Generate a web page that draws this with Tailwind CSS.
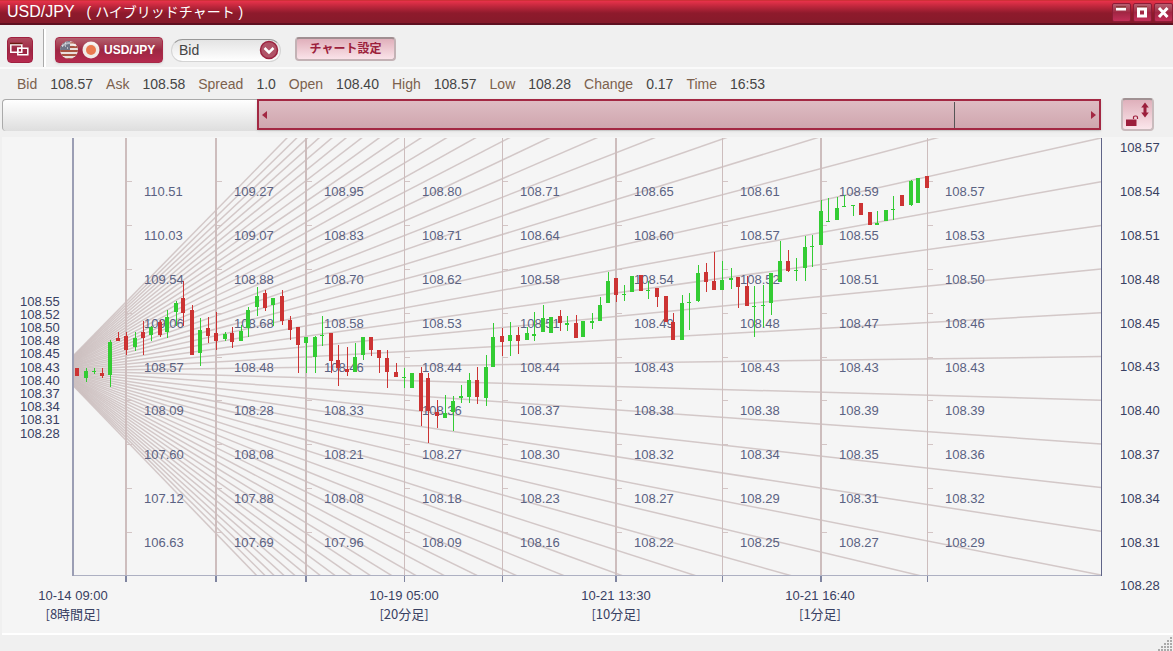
<!DOCTYPE html>
<html lang="ja">
<head>
<meta charset="utf-8">
<meta name="viewport" content="width=device-width, initial-scale=1">
<title>USD/JPY ( ハイブリッドチャート )</title>
<script src="https://cdn.jsdelivr.net/npm/@tailwindcss/browser@4"></script>
</head>
<body class="flex min-h-screen flex-col bg-[#f0f0f0] font-['Liberation_Sans','Noto_Sans_CJK_JP',sans-serif] text-[#444]">

<header class="flex h-[25px] items-center justify-between border-t border-b-2 border-t-[#cf3038] border-b-[#5e1020] bg-linear-to-b from-[#e8324a] via-[#8e1a2c] via-55% to-[#861a2a] pl-[7px] text-white">
  <h1 class="flex items-center whitespace-pre text-base leading-5">USD/JPY<span class="ml-3 text-sm leading-5">( ハイブリッドチャート )</span></h1>
  <div class="flex gap-[2px]">
    <button aria-label="最小化" class="h-[19px] w-[19px] rounded-xs border border-[#8d1c36] bg-linear-to-b from-[#b56070] via-[#a12643] to-[#c42f59]">
      <svg viewBox="0 0 16 17" class="h-[17px] w-4"><path d="M3 3.5h10v3H3z" fill="#fff"/><path d="M3 3h10" stroke="#6b1c10"/></svg>
    </button>
    <button aria-label="最大化" class="h-[19px] w-[19px] rounded-xs border border-[#8d1c36] bg-linear-to-b from-[#b56070] via-[#a12643] to-[#c42f59]">
      <svg viewBox="0 0 16 17" class="h-[17px] w-4"><path d="M3 3h10" stroke="#6b1c10"/><path d="M4.5 5h7v7h-7z" fill="none" stroke="#fff" stroke-width="3"/></svg>
    </button>
    <button aria-label="閉じる" class="h-[19px] w-[19px] rounded-xs border border-[#8d1c36] bg-linear-to-b from-[#b56070] via-[#a12643] to-[#c42f59]">
      <svg viewBox="0 0 16 17" class="h-[17px] w-4"><path d="M4 4l8.500 9M12.500 4L4 13" stroke="#fff" stroke-width="3"/></svg>
    </button>
  </div>
</header>

<div class="flex h-11 items-center border-b-2 border-[#fafafa] pt-2 pl-[7px]">
  <button aria-label="ウィンドウ連動" class="size-[26px] rounded border border-[#a02040] bg-linear-to-b from-[#b04a5e] via-[#9c2743] to-[#b82b50]">
    <svg viewBox="0 0 24 24" class="size-6" fill="none" stroke="#fff" stroke-width="1.500"><path d="M2.800 6.800h11v7.500h-11z"/><path d="M2 5.500h12.500" stroke="#6b1c10"/><path d="M9.800 10.300h10v6.500h-10z" fill="#9c2743"/><path d="M9.800 10.300h4v4h-4z"/></svg>
  </button>
  <div class="-mt-1 ml-[10px] h-[38px] w-[3px] border-l border-[#aaa] bg-white"></div>
  <button class="ml-[9px] flex h-[26px] w-[108px] items-center rounded-sm border border-[#a82a48] bg-linear-to-b from-[#b4606f] via-[#9c2743] to-[#b52a4e] pl-[3px] text-xs font-bold text-white shadow-sm">
    <svg viewBox="0 0 42 20" class="h-5 w-[42px] shrink-0">
      <defs><clipPath id="us"><circle cx="10" cy="10" r="9"/></clipPath></defs>
      <g clip-path="url(#us)"><path d="M0 0h20v20H0z" fill="#eadfdb"/><path d="M0 3h20M0 7h20M0 11h20M0 15h20M0 19h20" stroke="#a8523f" stroke-width="2"/><path d="M0 0h11v10H0z" fill="#6f7486"/><path d="M3 3h1M6 3h1M3 6h1M6 6h1M8 8h1" stroke="#fff"/></g>
      <circle cx="32" cy="10" r="8.500" fill="#f1ebe6"/><circle cx="32" cy="10" r="5" fill="#ea7a50"/>
      <path d="M3 6q7-6 14 0M25 6q7-6 14 0" fill="none" stroke="#fff" stroke-opacity=".5" stroke-width="2"/>
    </svg>
    <span class="ml-[3px]">USD/JPY</span>
  </button>
  <label class="relative ml-2 h-6 w-[110px]">
    <select aria-label="レート種別" class="h-[23px] w-full appearance-none rounded-full border border-[#d4d4d4] border-t-[#999] bg-linear-to-b from-[#e4e4e4] to-white pl-[7px] text-sm text-[#444]"><option>Bid</option><option>Ask</option></select>
    <svg viewBox="0 0 20 20" class="pointer-events-none absolute top-[2px] right-[2px] size-5"><circle cx="10" cy="10" r="8.500" fill="#b05468" stroke="#9c2440" stroke-width="1.500"/><path d="M5.500 8l4.500 4.500L14.500 8" fill="none" stroke="#fff" stroke-width="2.500"/></svg>
  </label>
  <button class="-mt-[2px] ml-[14px] h-6 w-[101px] rounded-sm border-2 border-[#c3b2b5] border-t-[#a08e91] bg-linear-to-b from-[#e0b0bb] to-[#fae3e9] text-xs font-bold text-[#9c1f3c]">チャート設定</button>
</div>

<dl class="flex h-[29px] items-center gap-[13px] pt-px pl-[17px] text-sm whitespace-nowrap [&_dt]:text-[#7c614d]">
  <dt>Bid</dt><dd>108.57</dd><dt>Ask</dt><dd>108.58</dd><dt>Spread</dt><dd>1.0</dd><dt>Open</dt><dd>108.40</dd>
  <dt>High</dt><dd>108.57</dd><dt>Low</dt><dd>108.28</dd><dt>Change</dt><dd>0.17</dd><dt>Time</dt><dd>16:53</dd>
</dl>

<div class="flex h-[39px] items-start pr-[19px] pl-[2px]">
  <div class="mt-px flex h-8 flex-1 rounded-l-sm border-t border-l border-[#aaa] bg-linear-to-b from-white to-[#dedede]">
    <div class="w-[23.1%]"></div>
    <div class="-mt-px flex h-[31px] flex-1 items-center justify-between border-2 border-[#a32843] bg-linear-to-b from-[#debcc3] to-[#cfa6ae] px-[3px] shadow">
      <svg viewBox="0 0 5 8" class="h-2 w-[5px]"><path d="M5 0v8L0 4z" fill="#a32843"/></svg>
      <div class="ml-[82.4%] h-[26px] w-px bg-[#555]"></div>
      <svg viewBox="0 0 5 8" class="ml-auto h-2 w-[5px]"><path d="M0 0v8l5-4z" fill="#a32843"/></svg>
    </div>
  </div>
  <button aria-label="縦軸ロック解除" class="ml-5 size-[33px] rounded-sm border-2 border-[#c9bbbd] border-t-[#a09193] bg-linear-to-b from-[#dfb0bb] to-[#fbe6eb]">
    <svg viewBox="0 0 29 29" class="size-[29px]"><path d="M3 19.500h10.500V26H3z" fill="#9c1f3c"/><path d="M10.500 19v-2q0-1 1.500-1h1q1.500 0 1.500 1.500V19" fill="none" stroke="#9c1f3c" stroke-width="1.200"/><path d="M22 2.500l3.800 5H23.500v5h2.300L22 17.500l-3.800-5h2.300v-5h-2.300z" fill="#9c1f3c"/></svg>
  </button>
</div>

<main class="ml-[2px] border-b-2 border-white bg-[#f5f5f5]">
  <svg id="chart" viewBox="2 137 1171 496" class="block h-auto w-full font-['Liberation_Sans','Noto_Sans_CJK_JP',sans-serif] text-[13px]" role="img" aria-label="USD/JPY ローソク足チャート"></svg>
</main>

<footer class="flex flex-1 items-end justify-end">
  <svg viewBox="0 0 15 15" class="size-[15px]"><path d="M12 2h2M9 5h2M12 5h2M6 8h2M9 8h2M12 8h2M3 11h2M6 11h2M9 11h2M12 11h2M0 14h2M3 14h2M6 14h2M9 14h2M12 14h2" stroke="#aaa" stroke-width="2"/></svg>
</footer>

<script>
const NS = 'http://www.w3.org/2000/svg';
const chart = document.getElementById('chart');
function add(tag, attrs, text) {
  const el = document.createElementNS(NS, tag);
  for (const k in attrs) el.setAttribute(k, attrs[k]);
  if (text) el.textContent = text;
  chart.appendChild(el);
}
const rect = (x, y, width, height, fill) => add('rect', {x, y, width, height, fill});

// Plot area clip
const defs = document.createElementNS(NS, 'defs');
defs.innerHTML = '<clipPath id="plot"><rect x="73" y="138" width="1029" height="437"/></clipPath>';
chart.appendChild(defs);

// Price levels fanning out from the compressed left scale to the right scale
for (let k = -24; k <= 25; k++) {
  add('line', {x1: 73, y1: 370.5 + k * 0.6, x2: 1101, y2: 356.5 + k * 43.7,
    stroke: '#cdbfbf', 'stroke-width': 1.5, 'stroke-opacity': 0.85, 'clip-path': 'url(#plot)'});
}

// Column separators: x, width, prices top to bottom
const columns = [
  [125, 2, '110.51 110.03 109.54 109.06 108.57 108.09 107.60 107.12 106.63'],
  [215, 2, '109.27 109.07 108.88 108.68 108.48 108.28 108.08 107.88 107.69'],
  [305, 2, '108.95 108.83 108.70 108.58 108.46 108.33 108.21 108.08 107.96'],
  [404, 1, '108.80 108.71 108.62 108.53 108.44 108.36 108.27 108.18 108.09'],
  [502, 1, '108.71 108.64 108.58 108.51 108.44 108.37 108.30 108.23 108.16'],
  [615, 2, '108.65 108.60 108.54 108.49 108.43 108.38 108.32 108.27 108.22'],
  [722, 1, '108.61 108.57 108.52 108.48 108.43 108.38 108.34 108.29 108.25'],
  [820, 2, '108.59 108.55 108.51 108.47 108.43 108.39 108.35 108.31 108.27'],
  [927, 1, '108.57 108.53 108.50 108.46 108.43 108.39 108.36 108.32 108.29']
];
rect(73, 575, 1029, 1, '#adb0c2');
rect(72, 138, 2, 438, '#9b9eb4');
rect(1101, 138, 1, 438, '#5f6488');
for (const [x, w, prices] of columns) {
  rect(x, 138, w, 437, '#cdbdbd');
  rect(x, 576, w, 6, '#8085a0');
  prices.split(' ').forEach((p, i) => {
    const y = Math.round(181.3 + i * 43.8);
    rect(x + w, y, 5, 1, '#d3c5c5');
    add('text', {x: x + (w === 2 ? 19 : 18), y: y + 15, fill: '#5a6282'}, p);
  });
}

// Candles: direction, x, high, low, body top, body bottom
const candles = `r 77 368 376 368 376|g 86 368 382 371 378|g 94 368 374 371 372|r 102 368 378 373 376|g 110 340 387 342 375|r 118 332 341 338 341|r 126 332 355 336 350|g 135 332 351 338 347|r 143 321 355 332 338|g 151 326 341 327 335|r 160 320 337 322 335|g 167 310 338 317 332|g 176 301 326 303 312|r 183 281 326 298 313|r 192 305 355 310 355|g 200 318 366 330 353|r 208 317 343 328 336|r 216 312 350 333 341|g 225 332 341 334 339|r 232 327 348 333 342|g 241 325 341 331 341|g 248 307 337 310 328|g 257 287 316 296 307|r 265 290 311 293 308|g 273 298 326 298 305|r 282 290 325 296 321|r 290 316 340 320 330|r 298 327 373 327 345|g 306 337 373 337 343|g 315 336 373 337 357|g 322 316 346 335 336|r 331 333 373 333 361|r 338 345 386 360 368|r 347 347 376 369 372|g 355 343 372 357 372|g 363 337 360 337 355|r 371 337 356 337 350|r 379 350 373 350 358|r 387 350 388 358 372|r 396 363 377 372 377|g 404 368 388 377 378|g 412 373 388 373 388|r 421 367 426 373 411|r 428 373 443 378 411|r 437 400 428 412 416|g 445 395 418 413 418|g 453 396 431 401 412|g 461 385 403 396 398|g 469 373 403 380 397|r 477 367 404 380 397|g 486 355 406 367 398|g 493 323 367 337 367|r 502 328 356 336 342|g 510 322 356 335 341|r 518 327 354 335 341|g 527 327 340 333 340|g 534 312 341 334 336|g 543 305 332 318 332|g 551 317 333 317 333|r 560 310 331 316 323|g 567 316 331 323 325|r 576 315 338 323 338|g 583 321 337 321 337|g 592 313 329 321 323|g 600 297 321 305 321|g 608 272 303 281 303|r 616 278 302 278 295|g 624 285 301 294 295|g 632 276 292 276 292|r 641 275 291 275 291|g 648 281 299 290 291|r 657 288 307 288 297|r 666 296 322 296 322|r 673 313 340 322 340|g 682 295 340 303 340|g 689 293 330 302 303|g 698 265 302 273 301|r 706 263 292 272 282|r 714 252 290 281 290|g 722 261 290 280 290|g 731 268 289 278 280|r 738 277 308 277 287|r 747 276 306 286 306|g 754 286 337 306 307|g 763 285 327 305 306|g 771 273 315 273 303|g 780 241 282 261 282|r 788 250 272 261 271|g 796 258 281 270 271|g 805 236 281 247 268|g 812 235 267 246 247|g 821 200 245 211 245|g 828 198 222 221 222|g 837 197 220 208 220|g 844 195 207 206 207|g 853 205 216 205 206|r 861 203 215 203 215|r 870 212 225 212 225|g 877 211 225 223 225|g 886 210 221 210 221|g 893 196 220 209 210|r 902 195 206 195 206|g 911 180 206 181 205|g 918 178 203 178 203|r 927 176 188 176 188`;
for (const c of candles.split('|')) {
  const [dir, ...n] = c.split(' ');
  const [x, high, low, top, bottom] = n.map(Number);
  const fill = dir === 'g' ? '#33cc33' : '#cc3333';
  rect(x, high, 1, low - high, fill);
  rect(x - 2, top, 4, bottom - top, fill);
}

// Left and right price scales
'108.55 108.52 108.50 108.48 108.45 108.43 108.40 108.37 108.34 108.31 108.28'.split(' ')
  .forEach((p, i) => add('text', {x: 20, y: Math.round(305.5 + i * 13.2), fill: '#384062'}, p));
'108.57 108.54 108.51 108.48 108.45 108.43 108.40 108.37 108.34 108.31 108.28'.split(' ')
  .forEach((p, i) => add('text', {x: 1120, y: Math.round(152.3 + i * 43.8), fill: '#384062'}, p));

// Time scale
for (const [x, time, span] of [[73, '10-14 09:00', '[8時間足]'], [404, '10-19 05:00', '[20分足]'], [616, '10-21 13:30', '[10分足]'], [820, '10-21 16:40', '[1分足]']]) {
  add('text', {x, y: 600, 'text-anchor': 'middle', fill: '#384062'}, time);
  add('text', {x, y: 619, 'text-anchor': 'middle', fill: '#384062', 'font-family': 'Noto Sans CJK JP, sans-serif'}, span);
}
</script>
</body>
</html>
